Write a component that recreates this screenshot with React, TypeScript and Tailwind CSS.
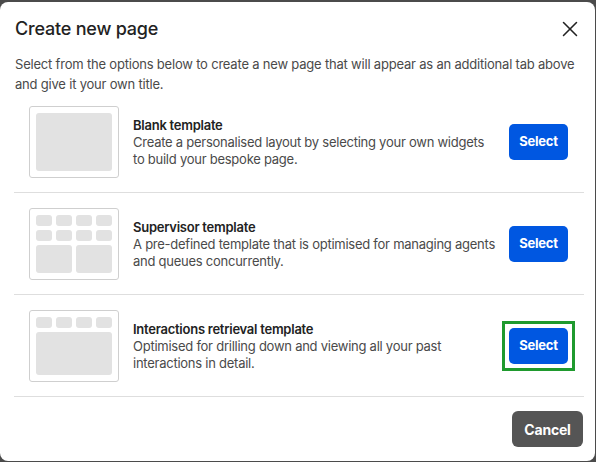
import { X } from "lucide-react";

type Template = {
  title: string;
  description: string[];
  layout: "blank" | "supervisor" | "interactions";
  focused?: boolean;
};

const templates: Template[] = [
  {
    title: "Blank template",
    description: [
      "Create a personalised layout by selecting your own widgets",
      "to build your bespoke page.",
    ],
    layout: "blank",
  },
  {
    title: "Supervisor template",
    description: [
      "A pre-defined template that is optimised for managing agents",
      "and queues concurrently.",
    ],
    layout: "supervisor",
  },
  {
    title: "Interactions retrieval template",
    description: [
      "Optimised for drilling down and viewing all your past",
      "interactions in detail.",
    ],
    layout: "interactions",
    focused: true,
  },
];

function Thumbnail({ layout }: { layout: Template["layout"] }) {
  const tile = "rounded-[3px] bg-[#e2e2e2]";
  return (
    <div className="h-[72px] w-[90px] shrink-0 rounded-[3px] border border-[#cfcfcf] bg-white p-[6px]">
      {layout === "blank" && <div className={`h-full w-full ${tile}`} />}
      {layout === "supervisor" && (
        <div className="flex h-full flex-col gap-[4px]">
          <div className="grid grid-cols-4 gap-[4px]">
            {Array.from({ length: 8 }).map((_, i) => (
              <div key={i} className={`h-[11px] ${tile}`} />
            ))}
          </div>
          <div className="grid flex-1 grid-cols-2 gap-[4px]">
            <div className={tile} />
            <div className={tile} />
          </div>
        </div>
      )}
      {layout === "interactions" && (
        <div className="flex h-full flex-col gap-[4px]">
          <div className="grid grid-cols-4 gap-[4px]">
            {Array.from({ length: 4 }).map((_, i) => (
              <div key={i} className={`h-[11px] ${tile}`} />
            ))}
          </div>
          <div className={`flex-1 ${tile}`} />
        </div>
      )}
    </div>
  );
}

export default function App() {
  return (
    <div className="h-[462px] w-[596px] bg-[#4b4b4b] pt-[2px] pr-[1px] font-['Inter',sans-serif]">
      <div className="flex h-[459px] flex-col rounded-[8px] bg-white pl-[14px] pr-[11px]">
        <div className="flex items-center justify-between pt-[14px]">
          <h1 className="pl-px text-[18px] font-medium leading-[26px] tracking-[-0.2px] text-[#222]">
            Create new page
          </h1>
          <button type="button" aria-label="Close" className="mr-[1px] text-[#222]">
            <X className="h-[26px] w-[26px]" strokeWidth={1.4} />
          </button>
        </div>

        <p className="mt-[12px] pl-px text-[13px] leading-[20px] tracking-[-0.2px] text-[#4a4a4a]">
          Select from the options below to create a new page that will appear as an additional tab above
          <br />
          and give it your own title.
        </p>

        <ul className="-mt-[3px]">
          {templates.map((t) => (
            <li
              key={t.title}
              className="flex items-center border-b border-[#dedede] pt-[15px] pb-[14px] pl-[15px] pr-[9px]"
            >
              <Thumbnail layout={t.layout} />
              <div className="ml-[14px] min-w-0 flex-1 text-[13px] leading-[17px] tracking-[-0.25px]">
                <p className="font-semibold text-[#222]">{t.title}</p>
                {t.description.map((line) => (
                  <p key={line} className="text-[#4a4a4a]">
                    {line}
                  </p>
                ))}
              </div>
              <div
                className={
                  t.focused
                    ? "border-[3px] border-[#1f9a2e] p-[4px]"
                    : "border-[3px] border-transparent p-[4px]"
                }
              >
                <button
                  type="button"
                  className="h-[36px] w-[59px] rounded-[5px] bg-[#0057e1] text-[13px] font-bold tracking-[-0.2px] text-white"
                >
                  Select
                </button>
              </div>
            </li>
          ))}
        </ul>

        <div className="mt-[14px] mr-[1px] flex justify-end">
          <button
            type="button"
            className="h-[36px] w-[71px] rounded-[6px] bg-[#555] text-[14px] font-bold tracking-[-0.2px] text-white"
          >
            Cancel
          </button>
        </div>
      </div>
    </div>
  );
}
